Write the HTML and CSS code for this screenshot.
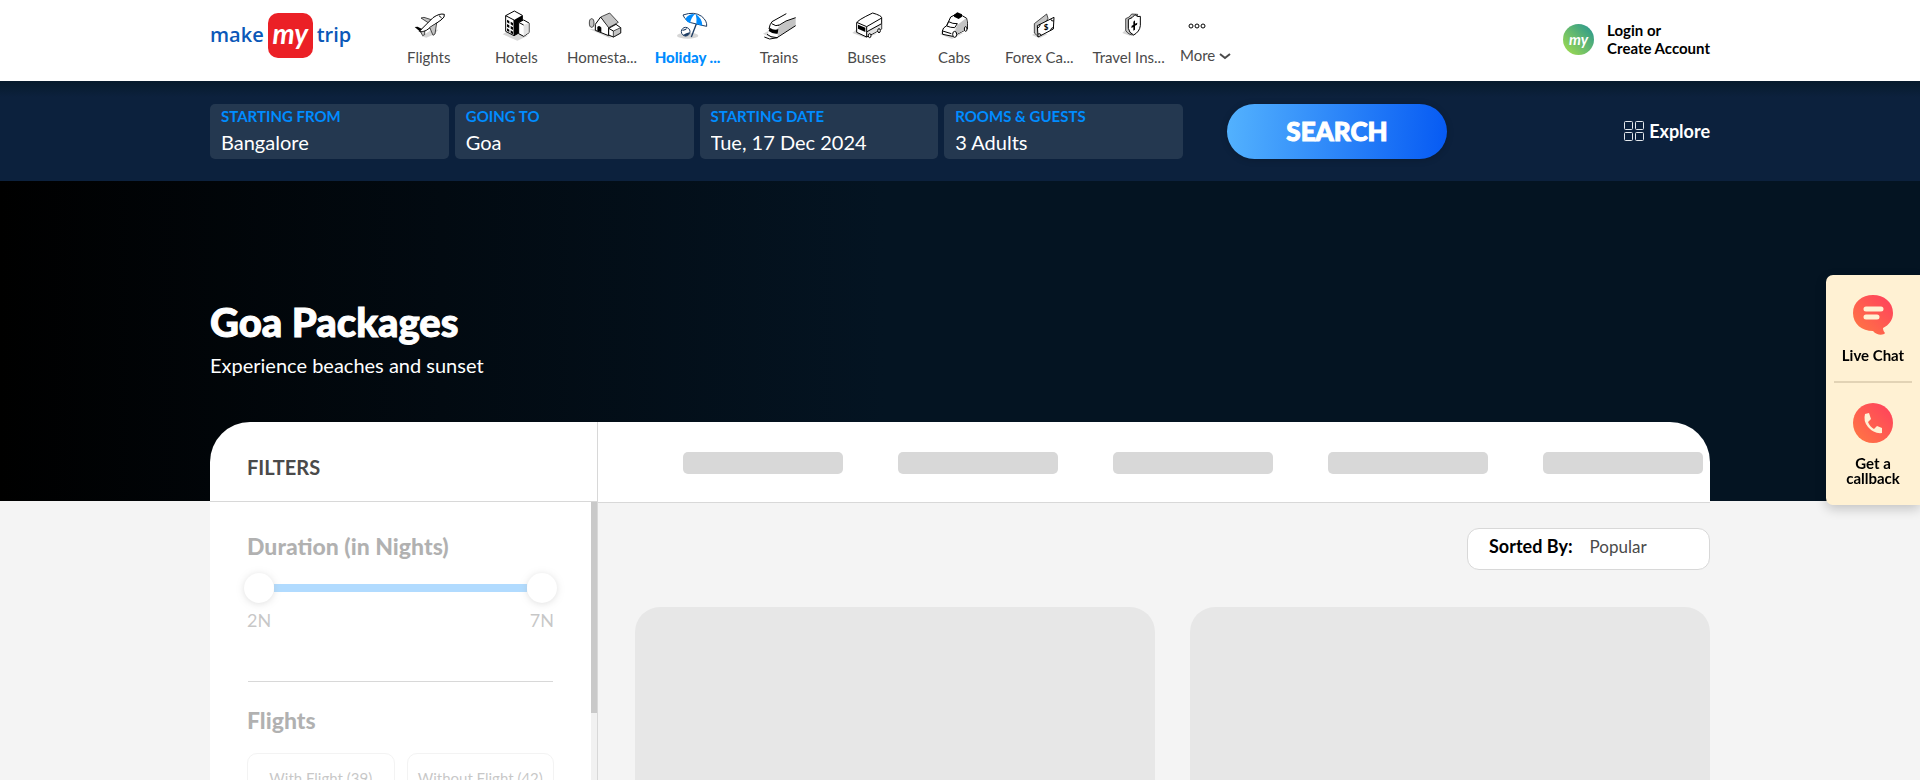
FILE: index.html
```html
<!DOCTYPE html>
<html lang="en">
<head>
<meta charset="utf-8">
<meta name="viewport" content="width=device-width, initial-scale=1">
<title>Goa Packages</title>
<link rel="stylesheet" href="styles.css">
</head>
<body>
<div class="page">
  <header class="header">
    <div class="wrap header-row">
      <a class="logo" href="#" aria-label="make my trip"><span>make</span><span class="logo-my">my</span><span>trip</span></a>
      <nav class="nav" aria-label="Services">
        <a class="nav-item" href="#">
          <svg class="nav-icon" viewBox="0 0 96 96" aria-hidden="true"><path class="shade" d="M26 82l30-20 20 0-12 14-24 10z"/><path class="grey" d="M24 27l9-2 28 9-11 10z"/><path class="white" d="M19 67L60 26Q80 12 94 16Q97 24 84 33L40 64Q27 73 19 67z"/><path class="dark" d="M5 54l9-1 13 7-7 7z"/><path class="grey" d="M50 55L71 42 66 75 60 79z"/><path class="grey" d="M23 69l12-3 0 11-6 3z"/><path class="line" d="M78 20l8 7"/></svg>
          <span>Flights</span></a>
        <a class="nav-item" href="#">
          <svg class="nav-icon" viewBox="0 0 96 96" aria-hidden="true"><path class="shade" d="M8 76l16-10 60 14-32 15z"/><path class="white" d="M17 20L43 6 67 19 67 66 42 80 17 67z"/><path class="ink" d="M42 33L67 19 67 66 42 80z"/><path class="line" d="M17 20L42 33V80"/><path class="ink" d="M21 32l7 4v8l-7-4zM32 38l7 4v8l-7-4zM21 45l7 4v8l-7-4zM32 51l7 4v8l-7-4zM21 58l7 4v7l-7-4zM32 64l7 4v8l-7-4z"/><path class="white" d="M56 40L71 33 87 42 87 71 71 82 56 74z"/><path class="pale" d="M71 48l15-6v29L71 81z"/><path class="line" d="M56 40l15 8"/></svg>
          <span>Hotels</span></a>
        <a class="nav-item cut" href="#">
          <svg class="nav-icon" viewBox="0 0 96 96" aria-hidden="true"><path class="shade" d="M4 60l60 27 34-15-40-10z"/><ellipse class="grey" cx="11" cy="42" rx="7" ry="13"/><path class="white" d="M22 46L38 24 62 54 62 80 22 64z"/><path class="grey" d="M38 24L65 12 91 40 62 56z"/><path class="ink" d="M28 54q6-7 12 2v14l-12-5z"/><path class="white" d="M62 58L84 46 98 56 98 72 76 84 62 78z"/><path class="grey" d="M76 66l22-10v16L76 84z"/><path class="line" d="M62 58l14 8"/></svg>
          <span>Homesta...</span></a>
        <a class="nav-item cut active" href="#">
          <svg class="nav-icon" viewBox="0 0 96 96" aria-hidden="true"><ellipse class="shade" cx="38" cy="80" rx="32" ry="9"/><path d="M65 42L49 84" stroke="#1d3c63" stroke-width="4"/><path d="M24 18Q58 6 80 22Q97 36 95 52Q76 48 60 44Q32 40 24 18z" fill="#fff" stroke="#1d3c63" stroke-width="3"/><path d="M60 15Q40 14 31 30Q36 40 46 43Q46 28 60 15zM62 15Q66 30 64 45L82 50Q82 28 62 15z" fill="#008cff"/><circle cx="32" cy="68" r="13" fill="#fff" stroke="#1d3c63" stroke-width="3"/><path d="M20 64q10 4 18-7M24 78q10-6 20-8l-4 8-8 4z" fill="#1d3c63"/></svg>
          <span>Holiday ...</span></a>
        <a class="nav-item" href="#">
          <svg class="nav-icon" viewBox="0 0 96 96" aria-hidden="true"><path class="shade" d="M0 74l20-10 40 4-32 20z"/><path class="white nostroke" d="M27 36L68 14 98 27 98 50 40 86 14 80 18 58z"/><path class="grey nostroke" d="M44 58Q60 36 98 27V50L44 82z"/><path class="line" d="M27 38L70 14M46 50Q66 34 98 26M98 50L42 86M27 38Q20 46 18 60M12 76l12 7 18 3M26 44q14 10 22 4"/><path class="ink" d="M20 56q14 10 26 4l-2 14q-14 2-27-8z"/><path class="line" d="M4 84l16 6 24-4"/></svg>
          <span>Trains</span></a>
        <a class="nav-item" href="#">
          <svg class="nav-icon" viewBox="0 0 96 96" aria-hidden="true"><path class="shade" d="M4 72l14-12 60 14-34 13z"/><path class="white" d="M17 42Q18 34 65 12Q92 20 92 26V60L47 84 17 70z"/><path class="pale" d="M48 66L91 42V60L48 82z"/><path class="line" d="M17 40L47 53 92 27M47 53V84M48 68L92 44"/><path class="ink" d="M21 47l22 9v13l-22-10z"/><ellipse class="white" cx="56" cy="80" rx="4" ry="6"/><ellipse class="white" cx="84" cy="65" rx="4" ry="6"/></svg>
          <span>Buses</span></a>
        <a class="nav-item" href="#">
          <svg class="nav-icon" viewBox="0 0 96 96" aria-hidden="true"><path class="shade" d="M6 76l10-14 60 10-34 18z"/><path class="white" d="M13 66Q14 56 26 50L38 24Q60 8 86 28Q90 44 88 60L44 82 14 76z"/><path class="grey nostroke" d="M58 48L84 28Q89 44 87 60L52 78Q48 64 58 48z"/><path class="white" d="M32 38q12 7 26 6l-8 12q-12 0-24-5z"/><path class="ink" d="M48 17l10-7 14 6v7l-10 7-14-7z"/><path class="line" d="M14 66l26 8"/><ellipse class="white" cx="50" cy="76" rx="6" ry="9"/><ellipse class="white" cx="83" cy="60" rx="4" ry="7"/></svg>
          <span>Cabs</span></a>
        <a class="nav-item cut" href="#">
          <svg class="nav-icon" viewBox="0 0 96 96" aria-hidden="true"><path class="shade" d="M18 78l20-12 26 10-24 12z"/><path class="grey" d="M25 44L62 15 66 28 36 82 25 72z"/><path class="white" d="M34 50L84 25 82 60 36 84z"/><path class="line" d="M34 58q8-4 9-12M74 30q1 7 9 6M36 75q8-3 10 4M73 65q2-9 10-10"/><text class="coin" x="53" y="64">$</text></svg>
          <span>Forex Ca...</span></a>
        <a class="nav-item cut" href="#">
          <svg class="nav-icon" viewBox="0 0 96 96" aria-hidden="true"><path class="shade" d="M28 72l14-14 26 18-18 4z"/><path class="grey" d="M38 29Q50 26 56 15L74 16 62 78Q46 78 38 64z"/><path class="white" d="M46 31Q58 28 66 17Q74 26 82 22V50Q80 68 62 78Q48 72 46 58z"/><path class="ink" d="M61 38l5-4v10l7-3-1 6-6 3v12l-5 3V54l-6 3 1-7 5-2z"/></svg>
          <span>Travel Ins...</span></a>
      </nav>
      <button class="more" type="button">
        <svg class="more-dots" viewBox="0 0 18 6" aria-hidden="true"><circle cx="3" cy="3" r="2"/><circle cx="9" cy="3" r="2"/><circle cx="15" cy="3" r="2"/></svg>
        <span class="more-label">More <svg class="chevron" viewBox="0 0 12 8" aria-hidden="true"><path d="M1 1l5 4 5-4"/></svg></span>
      </button>
      <a class="login" href="#"><span class="avatar" aria-hidden="true">my</span><span>Login or<br>Create Account</span></a>
    </div>
  </header>

  <section class="search">
    <form class="wrap search-row">
      <div class="fields">
        <div class="field"><label for="from">STARTING FROM</label><input id="from" value="Bangalore"></div>
        <div class="field"><label for="to">GOING TO</label><input id="to" value="Goa"></div>
        <div class="field"><label for="date">STARTING DATE</label><input id="date" value="Tue, 17 Dec 2024"></div>
        <div class="field"><label for="guests">ROOMS &amp; GUESTS</label><input id="guests" value="3 Adults"></div>
      </div>
      <button class="search-btn" type="button">SEARCH</button>
      <a class="explore" href="#"><svg viewBox="0 0 20 20" aria-hidden="true"><rect x="0.5" y="0.5" width="8" height="8" rx="1"/><rect x="11.5" y="0.5" width="8" height="8" rx="1"/><rect x="0.5" y="11.5" width="8" height="8" rx="1"/><rect x="11.5" y="11.5" width="8" height="8" rx="1"/></svg>Explore</a>
    </form>
  </section>

  <section class="hero">
    <div class="wrap">
      <h1>Goa Packages</h1>
      <p>Experience beaches and sunset</p>
    </div>
  </section>

  <main class="wrap listing">
    <aside class="filters">
      <h2 class="filters-head">FILTERS</h2>
      <div class="filters-body">
        <div class="filters-content">
          <h3>Duration (in Nights)</h3>
          <div class="range">
            <input type="range" min="2" max="7" value="2" aria-label="Minimum nights">
            <input type="range" min="2" max="7" value="7" aria-label="Maximum nights">
          </div>
          <div class="range-labels"><span>2N</span><span>7N</span></div>
          <hr>
          <h3>Flights</h3>
          <div class="options">
            <button type="button">With Flight (39)</button>
            <button type="button">Without Flight (42)</button>
          </div>
        </div>
        <div class="scrollbar" aria-hidden="true"><div class="scroll-thumb"></div></div>
      </div>
    </aside>
    <div class="results">
      <div class="tabs"><i></i><i></i><i></i><i></i><i></i></div>
      <div class="results-body">
        <div class="sort"><label for="sort">Sorted By:</label><select id="sort"><option>Popular</option></select></div>
        <div class="cards"><div class="card"></div><div class="card"></div></div>
      </div>
    </div>
  </main>

  <aside class="contact">
    <button type="button">
      <svg viewBox="0 0 40 40" aria-hidden="true"><defs><linearGradient id="warm" x1="0" y1="1" x2="1" y2="0"><stop offset="0" stop-color="#ff7a42"/><stop offset="1" stop-color="#ff3e5e"/></linearGradient></defs><path fill="url(#warm)" d="M20 0C31 0 40 7 40 18c0 7-4 12-10 15 0 2 1 4 2 5-1 2-8 3-12-2C9 36 0 29 0 18 0 7 9 0 20 0z"/><path d="M13 14h15M13 22h11" stroke="#fff1d3" stroke-width="5" stroke-linecap="round"/></svg>
      Live Chat
    </button>
    <hr>
    <button type="button">
      <svg viewBox="0 0 40 40" aria-hidden="true"><circle cx="20" cy="20" r="20" fill="url(#warm)"/><path fill="#fff1d3" d="M12 11l4-1 2 6-3 3q2 5 6 7l3-3 5 2v5q-8 1-14-6-5-6-3-13z"/></svg>
      Get a<br>callback
    </button>
  </aside>
</div>
</body>
</html>
```
FILE: styles.css
```css
* { box-sizing: border-box; }
body { margin: 0; font-family: Lato, "Open Sans", sans-serif; color: #000; background: #f4f4f4; }
a { color: inherit; text-decoration: none; }
button, input, select { font: inherit; color: inherit; border: 0; padding: 0; margin: 0; background: none; }
h1, h2, h3, p { margin: 0; }

.page { height: 100vh; overflow: hidden; display: flex; flex-direction: column; }
.wrap { width: 100%; max-width: 1500px; margin: 0 auto; }

.header { background: #fff; height: 81px; flex: none; }
.header-row { display: flex; align-items: flex-start; }

.logo { display: flex; align-items: center; gap: 4px; width: 182px; height: 44px; margin-top: 13px; color: #0b58b8; font: 600 20px/28px "Open Sans", sans-serif; }
.logo-my { width: 45px; height: 45px; border-radius: 10px; background: #eb2026; color: #fff; font: italic 700 28px/40px Lato, sans-serif; text-align: center; flex: none; }

.nav { display: grid; grid-template-columns: repeat(9, 1fr); gap: 14px; width: 774px; margin-right: 14px; padding-top: 9px; }
.nav-item { display: flex; flex-direction: column; align-items: center; gap: 7px; font-size: 15px; line-height: 18px; color: #4a4a4a; white-space: nowrap; }
.nav-item.cut span { align-self: flex-start; }
.nav-item.active { color: #008cff; font-weight: 900; }
.nav-icon { width: 32px; height: 32px; overflow: visible; stroke-linejoin: round; }
.shade { fill: #d6d6d6; }
.pale { fill: #e2e2e2; }
.white { fill: #fff; stroke: #000; stroke-width: 3; }
.grey { fill: #c4c4c4; stroke: #000; stroke-width: 2; }
.dark, .ink { fill: #000; }
.line { fill: none; stroke: #000; stroke-width: 3; }
.nostroke { stroke: none; }
.coin { font: 900 24px Lato, sans-serif; }

.more { display: flex; flex-direction: column; align-items: flex-start; gap: 17px; padding-top: 23px; font-size: 15px; line-height: 18px; color: #4a4a4a; }
.more-dots { width: 18px; height: 6px; margin-left: 8px; fill: none; stroke: #000; }
.chevron { width: 12px; height: 8px; fill: none; stroke: #4a4a4a; stroke-width: 2; }

.login { display: flex; align-items: center; gap: 13px; margin-left: auto; padding-top: 21px; font-size: 15px; line-height: 18px; font-weight: 700; }
.avatar { width: 31px; height: 31px; border-radius: 50%; background: linear-gradient(45deg, #a8e04a, #219393); color: #fff; font: italic 700 15px/30px Lato, sans-serif; text-align: center; }

.search { background: linear-gradient(#061a2c, #0c213d 16px); height: 100px; flex: none; }
.search-row { display: flex; align-items: center; height: 100%; }
.fields { display: grid; grid-template-columns: repeat(4, 1fr); gap: 6px; width: 973px; }
.field { background: #243850; border-radius: 5px; height: 55px; padding: 2px 11px; }
.field label { display: block; color: #008cff; font-size: 15px; line-height: 20px; font-weight: 700; }
.field input { display: block; width: 100%; height: 32px; color: #fff; font-size: 20px; line-height: 32px; }
.search-btn { width: 220px; height: 55px; margin-left: 44px; border-radius: 28px; background: linear-gradient(93deg, #53b2fe, #065af3); color: #fff; font-size: 26px; line-height: 52px; font-weight: 900; -webkit-text-stroke: 1px #fff; box-shadow: 0 1px 7px rgba(0, 0, 0, .2); }
.explore { margin-left: auto; display: flex; align-items: center; gap: 5px; color: #fff; font-size: 18px; font-weight: 700; }
.explore svg { width: 20px; height: 20px; fill: none; stroke: #e4e8ec; stroke-width: 1; }

.hero { flex: none; height: 320px; padding-top: 116px; color: #fff; background: linear-gradient(90deg, #000 0%, #041422 46%); }
.hero h1 { font-size: 40px; line-height: 50px; font-weight: 900; -webkit-text-stroke: 1px #fff; }
.hero p { font-size: 20px; line-height: 24px; padding-top: 6px; }

.listing { flex: 1; min-height: 0; display: flex; margin-top: -79px; }
.filters { width: 388px; flex: none; display: flex; flex-direction: column; background: #fff; border-right: 1px solid #d8d8d8; border-top-left-radius: 40px; }
.filters-head { flex: none; height: 80px; padding: 33px 37px 0; border-bottom: 1px solid #d8d8d8; color: #4a4a4a; font-size: 20px; line-height: 24px; font-weight: 700; }
.filters-body { flex: 1; min-height: 0; display: flex; overflow: hidden; }
.filters-content { flex: 1; padding: 30px 37px; opacity: .3; }
.filters h3 { font-size: 23px; line-height: 28px; font-weight: 900; }
.range { display: grid; height: 30px; margin: 13px -3px 0; background: linear-gradient(#008cff, #008cff) center / calc(100% - 60px) 8px no-repeat; }
.range input { grid-area: 1 / 1; appearance: none; width: 100%; height: 30px; pointer-events: none; }
.range input::-webkit-slider-thumb { appearance: none; width: 30px; height: 30px; border-radius: 50%; background: #fff; box-shadow: 0 1px 7px rgba(0, 0, 0, .4); pointer-events: auto; }
.range-labels { display: flex; justify-content: space-between; margin-top: 6px; font-size: 18px; line-height: 22px; color: #4a4a4a; }
.filters-content hr { height: 1px; border: 0; margin: 50px 1px 24px; background: #808080; }
.options { display: grid; grid-template-columns: 1fr 1fr; gap: 12px; margin-top: 19px; }
.options button { height: 50px; border: 1px solid #d8d8d8; border-radius: 10px; font-size: 15px; color: #4a4a4a; white-space: nowrap; }
.scrollbar { width: 6px; background: #f1f1f1; }
.scroll-thumb { height: 211px; background: #c9c9c9; }

.results { flex: 1; min-width: 0; display: flex; flex-direction: column; }
.tabs { flex: none; height: 81px; display: flex; gap: 55px; padding: 30px 7px 0 85px; background: #fff; border-bottom: 1px solid #d8d8d8; border-top-right-radius: 40px; }
.tabs i { flex: 1; height: 22px; border-radius: 5px; background: #d8d8d8; }
.results-body { flex: 1; min-height: 0; display: flex; flex-direction: column; gap: 37px; padding: 25px 0 0 37px; }
.sort { flex: none; align-self: flex-end; display: flex; gap: 17px; width: 243px; height: 42px; padding: 5px 21px 0; border: 1px solid #d8d8d8; border-radius: 12px; background: #fff; font-size: 18px; line-height: 24px; }
.sort label { font-weight: 700; }
.sort select { appearance: none; flex: 1; height: 26px; color: #4a4a4a; font-size: 17px; }
.cards { flex: 1; display: grid; grid-template-columns: 1fr 1fr; gap: 35px; }
.card { background: #e7e7e7; border-radius: 25px 25px 0 0; }

.contact { position: fixed; right: 0; top: 275px; z-index: 2; width: 94px; height: 230px; padding: 20px 8px 0 8px; background: #fff1d3; border-radius: 7px 0 0 7px; box-shadow: 0 4px 12px rgba(0, 0, 0, .2); }
.contact button { display: block; width: 100%; font-size: 15px; line-height: 15px; font-weight: 700; }
.contact svg { display: block; width: 40px; height: 40px; margin: 0 auto 13px; }
.contact hr { height: 2px; border: 0; margin: 18px 0 20px; background: #e2d3b5; }
```
